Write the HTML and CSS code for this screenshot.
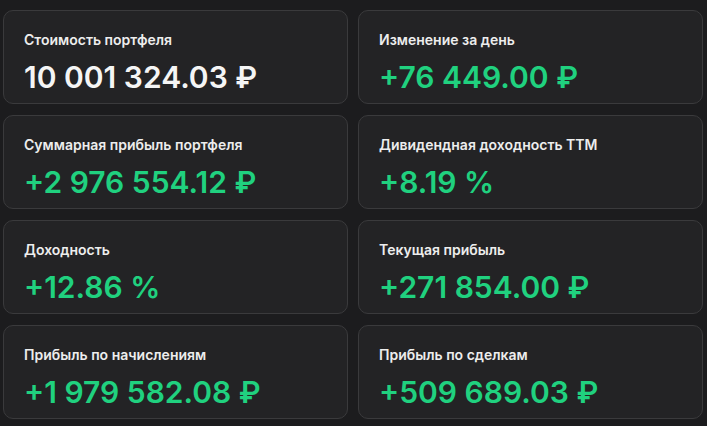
FILE: index.html
```html
<!DOCTYPE html>
<html lang="ru">
<head>
<meta charset="utf-8">
<link rel="stylesheet" href="styles.css">
</head>
<body>
<div class="grid">
  <div class="card"><div class="label">Стоимость портфеля</div><div class="value">10 001 324.03 ₽</div></div>
  <div class="card"><div class="label">Изменение за день</div><div class="value pos">+76 449.00 ₽</div></div>
  <div class="card"><div class="label">Суммарная прибыль портфеля</div><div class="value pos">+2 976 554.12 ₽</div></div>
  <div class="card"><div class="label">Дивидендная доходность TTM</div><div class="value pos">+8.19 %</div></div>
  <div class="card"><div class="label">Доходность</div><div class="value pos">+12.86 %</div></div>
  <div class="card"><div class="label">Текущая прибыль</div><div class="value pos">+271 854.00 ₽</div></div>
  <div class="card"><div class="label">Прибыль по начислениям</div><div class="value pos">+1 979 582.08 ₽</div></div>
  <div class="card"><div class="label">Прибыль по сделкам</div><div class="value pos">+509 689.03 ₽</div></div>
</div>
</body>
</html>
```
FILE: styles.css
```css
html, body {
  margin: 0;
  padding: 0;
  background: #1c1c1e;
  width: 707px;
  height: 426px;
  overflow: hidden;
}
body {
  font-family: Inter, "Noto Sans", sans-serif;
  color: #f2f2f2;
}
.grid {
  display: grid;
  grid-template-columns: 345px 345px;
  grid-auto-rows: 94px;
  column-gap: 10px;
  row-gap: 11px;
  padding: 10px 4px 0 3px;
}
.card {
  box-sizing: border-box;
  background: #232325;
  border: 1px solid #3a3a3c;
  border-radius: 10px;
  padding: 20px 20px 0 20px;
  display: flex;
  flex-direction: column;
}
.label {
  font-size: 14px;
  font-weight: 600;
  line-height: 18px;
  color: #ededed;
}
.value {
  margin-top: 10px;
  font-size: 30px;
  font-weight: 600;
  line-height: 36px;
  color: #f5f5f5;
}
.value.pos {
  color: #20d17f;
}
```
